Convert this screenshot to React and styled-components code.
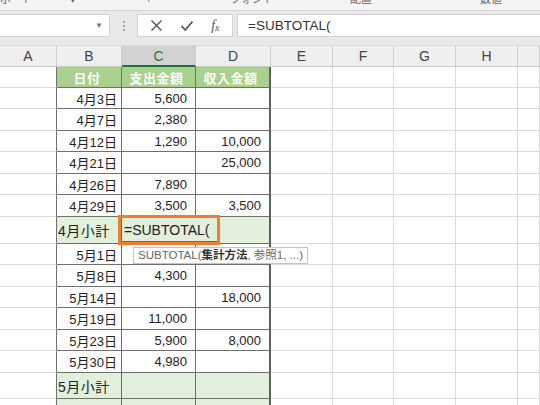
import React from "react";
import styled, { createGlobalStyle } from "styled-components";

const Global = createGlobalStyle`
  html, body { margin: 0; padding: 0; background: #ffffff; }
  body { font-family: "Liberation Sans", "Noto Sans CJK JP", sans-serif; overflow: hidden; }
`;

const COLS = "57px 65px 74px 75px 62px 61px 62px 62px 1fr";
const JP = `"Liberation Sans", "Noto Sans CJK JP", sans-serif`;

const Page = styled.div`
  width: 540px;
  height: 405px;
  overflow: hidden;
  display: flex;
  flex-direction: column;
`;

const TopStrip = styled.div`
  height: 10px;
  flex: none;
  background: #f4f4f4;
  border-bottom: 1px solid #d4d4d4;
  overflow: hidden;
  display: flex;
`;

const StripLabel = styled.span`
  flex: none;
  width: ${(p) => p.$w}px;
  font-family: ${JP};
  font-size: 11px;
  line-height: 11px;
  margin-top: -6px;
  color: #666;
`;

const FormulaArea = styled.div`
  height: 34px;
  flex: none;
  background: #e8e8e8;
  display: flex;
  align-items: flex-start;
  padding-top: 3px;
  box-sizing: border-box;
`;

const NameBox = styled.div`
  width: 110px;
  height: 23px;
  background: #fff;
  border: 1px solid #d3d3d3;
  border-left: none;
  box-sizing: border-box;
  display: flex;
  justify-content: flex-end;
  align-items: center;
  padding-right: 6px;
  color: #777;
  font-size: 8px;
`;

const Dots = styled.div`
  width: 27px;
  height: 23px;
  display: flex;
  flex-direction: column;
  align-items: center;
  justify-content: center;
  gap: 2px;
  & > i {
    width: 2px;
    height: 2px;
    background: #a5a5a5;
    display: block;
  }
`;

const ButtonGroup = styled.div`
  width: 96px;
  height: 23px;
  background: #fff;
  border: 1px solid #d3d3d3;
  box-sizing: border-box;
  display: flex;
  align-items: center;
  justify-content: space-around;
  padding: 0 4px;
`;

const Fx = styled.span`
  font-family: "Liberation Serif", serif;
  font-style: italic;
  font-size: 14px;
  color: #555;
  & sub { font-size: 10px; vertical-align: -1px; }
`;

const FormulaInput = styled.div`
  flex: 1;
  margin-left: 4px;
  height: 23px;
  background: #fff;
  border: 1px solid #d3d3d3;
  border-right: none;
  box-sizing: border-box;
  padding-left: 10px;
  font-size: 13.5px;
  line-height: 21px;
  color: #333;
`;

const Grid = styled.div`
  flex: 1;
  display: flex;
  flex-direction: column;
`;

const HeaderRow = styled.div`
  display: grid;
  grid-template-columns: ${COLS};
  height: 22px;
  flex: none;
  background: #efefef;
  border-top: 1px solid #dcdcdc;
  box-sizing: border-box;
`;

const ColHead = styled.div`
  box-sizing: border-box;
  display: flex;
  align-items: center;
  justify-content: center;
  font-size: 14px;
  color: ${(p) => (p.$sel ? "#217346" : "#444")};
  background: ${(p) => (p.$sel ? "#d2d2d2" : "#efefef")};
  border-right: 1px solid #cfcfcf;
  border-bottom: ${(p) => (p.$sel ? "2px solid #217346" : "1px solid #c8c8c8")};
`;

const Row = styled.div`
  display: grid;
  grid-template-columns: ${COLS};
  height: ${(p) => p.$h}px;
  flex: none;
`;

const Cell = styled.div`
  position: relative;
  box-sizing: border-box;
  display: flex;
  align-items: center;
  font-family: ${JP};
  font-size: 13px;
  color: #222;
  white-space: nowrap;
  border-right: 1px solid ${(p) => (p.$darkRight ? "#6f6f6f" : "#dcdcdc")};
  border-bottom: 1px solid #dcdcdc;
`;

const TCell = styled(Cell)`
  border-bottom: 1px solid #6f6f6f;
  border-right: ${(p) => (p.$outer ? "2px solid #5f5f5f" : "1px solid #6f6f6f")};
  justify-content: ${(p) =>
    p.$kind === "head" ? "center" : p.$kind === "label" ? "flex-start" : "flex-end"};
  padding-right: ${(p) => (p.$num ? 8 : 4)}px;
  padding-left: ${(p) => (p.$kind === "label" ? 1 : 0)}px;
  background: ${(p) =>
    p.$kind === "head" ? "#a9d08e" : p.$kind === "label" || p.$sub ? "#e2efda" : "#fff"};
  color: ${(p) => (p.$kind === "head" ? "#fff" : "#222")};
  font-weight: ${(p) => (p.$kind === "head" ? 700 : 400)};
  letter-spacing: ${(p) => (p.$kind === "head" ? "0.5px" : p.$kind === "label" ? "0.5px" : "0")};
  font-size: ${(p) => (p.$kind === "label" ? "14px" : "13px")};
`;

const EditBox = styled.div`
  position: absolute;
  left: -4px;
  top: -2px;
  width: 102px;
  height: 30px;
  box-sizing: border-box;
  border: 3px solid #ed7d31;
  background: #e2efda;
  box-shadow: inset 1px -1px 0 #3f8a4c;
  z-index: 2;
  display: flex;
  align-items: center;
  padding-left: 3px;
  font-family: "Liberation Sans", sans-serif;
  font-size: 14px;
  color: #222;
`;

const Tip = styled.div`
  position: absolute;
  left: 11px;
  top: 30px;
  z-index: 3;
  background: #fff;
  border: 1px solid #c4c4c4;
  padding: 0 4px;
  height: 17px;
  box-sizing: border-box;
  line-height: 15px;
  font-family: ${JP};
  font-size: 11.5px;
  color: #666;
  white-space: nowrap;
  & b { color: #333; font-weight: 700; }
`;

const Close = () => (
  <svg width="13" height="13" viewBox="0 0 13 13">
    <path d="M1.5 1.5 L11.5 11.5 M11.5 1.5 L1.5 11.5" stroke="#555" strokeWidth="1.4" fill="none" />
  </svg>
);

const Check = () => (
  <svg width="14" height="12" viewBox="0 0 14 12">
    <path d="M1.5 6 L5.2 10 L12.5 1.5" stroke="#555" strokeWidth="1.8" fill="none" />
  </svg>
);

const data = [
  { t: "row", d: ["4月3日", "5,600", ""] },
  { t: "row", d: ["4月7日", "2,380", ""] },
  { t: "row", d: ["4月12日", "1,290", "10,000"] },
  { t: "row", d: ["4月21日", "", "25,000"] },
  { t: "row", d: ["4月26日", "7,890", ""] },
  { t: "row", d: ["4月29日", "3,500", "3,500"] },
  { t: "sub", d: ["4月小計"], active: true, h: 27 },
  { t: "row", d: ["5月1日", "", ""] },
  { t: "row", d: ["5月8日", "4,300", ""] },
  { t: "row", d: ["5月14日", "", "18,000"] },
  { t: "row", d: ["5月19日", "11,000", ""] },
  { t: "row", d: ["5月23日", "5,900", "8,000"] },
  { t: "row", d: ["5月30日", "4,980", ""] },
  { t: "sub", d: ["5月小計"], h: 26 },
  { t: "sub", d: [""], h: 26 },
];

const heights = [21, 22, 21, 22, 21, 22];

const Blank = ({ count }) =>
  Array.from({ length: count }).map((_, i) => <Cell key={"e" + i} />);

export default function App() {
  let dataIdx = 0;
  return (
    <Page>
      <Global />
      <TopStrip>
        <StripLabel $w={70}>ボード</StripLabel>
        <StripLabel $w={78}>▾</StripLabel>
        <StripLabel $w={82}>⌐</StripLabel>
        <StripLabel $w={120}>フォント</StripLabel>
        <StripLabel $w={130}>配置</StripLabel>
        <StripLabel $w={60}>数値</StripLabel>
      </TopStrip>
      <FormulaArea>
        <NameBox>▼</NameBox>
        <Dots>
          <i />
          <i />
          <i />
        </Dots>
        <ButtonGroup>
          <Close />
          <Check />
          <Fx>
            f<sub>x</sub>
          </Fx>
        </ButtonGroup>
        <FormulaInput>=SUBTOTAL(</FormulaInput>
      </FormulaArea>
      <Grid>
        <HeaderRow>
          {["A", "B", "C", "D", "E", "F", "G", "H", ""].map((c) => (
            <ColHead key={c || "x"} $sel={c === "C"}>
              {c}
            </ColHead>
          ))}
        </HeaderRow>
        <Row $h={21}>
          <Cell $darkRight />
          <TCell $kind="head">日付</TCell>
          <TCell $kind="head">支出金額</TCell>
          <TCell $kind="head" $outer>
            収入金額
          </TCell>
          <Blank count={5} />
        </Row>
        {data.map((r, i) => {
          const h = r.h || heights[dataIdx++ % 6];
          if (r.t === "sub") {
            return (
              <Row key={i} $h={h}>
                <Cell $darkRight />
                <TCell $kind="label">{r.d[0]}</TCell>
                <TCell $sub>
                  {r.active && (
                    <>
                      <EditBox>=SUBTOTAL(</EditBox>
                      <Tip>
                        SUBTOTAL(<b>集計方法</b>, 参照1, ...)
                      </Tip>
                    </>
                  )}
                </TCell>
                <TCell $sub $outer />
                <Blank count={5} />
              </Row>
            );
          }
          return (
            <Row key={i} $h={h}>
              <Cell $darkRight />
              <TCell>{r.d[0]}</TCell>
              <TCell $num>{r.d[1]}</TCell>
              <TCell $num $outer>
                {r.d[2]}
              </TCell>
              <Blank count={5} />
            </Row>
          );
        })}
      </Grid>
    </Page>
  );
}
